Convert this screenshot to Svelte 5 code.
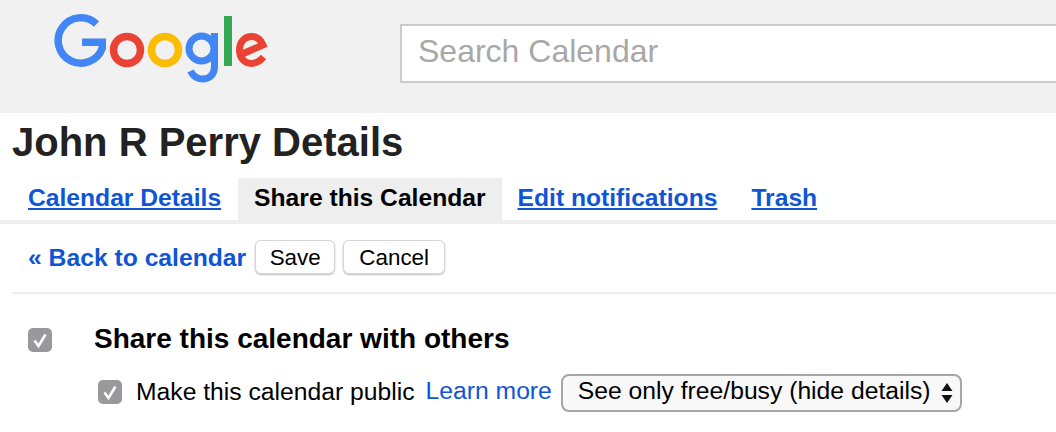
<script lang="ts">
	const tabs = [
		{ label: 'Calendar Details', active: false },
		{ label: 'Share this Calendar', active: true },
		{ label: 'Edit notifications', active: false },
		{ label: 'Trash', active: false }
	];
</script>

<div class="page">
	<header class="top">
		<svg class="logo" width="214" height="70" viewBox="54 14 214 70" aria-label="Google">
			<path d="M96.500 24 A22.700 22.700 0 1 0 102.300 48 L102.300 42.300 L82 42.300" fill="none" stroke="#4285f4" stroke-width="7.500" />
			<circle cx="127" cy="50" r="13.500" fill="none" stroke="#ea4335" stroke-width="7.500" />
			<circle cx="165" cy="50" r="13.500" fill="none" stroke="#fbbc05" stroke-width="7.500" />
			<circle cx="201.500" cy="48.500" r="12.500" fill="none" stroke="#4285f4" stroke-width="7" />
			<path d="M214.500 33 V66 C214.500 75 209.500 79 202.500 79 C197 79 193 76 190.500 71" fill="none" stroke="#4285f4" stroke-width="7" />
			<rect x="224" y="16" width="8" height="50" fill="#34a853" />
			<path d="M240 55 L263 45 C260.500 39 256 36.500 251.500 36.500 C244 36.500 239.500 42.500 239.500 50 C239.500 58 244.500 63.500 251.500 63.500 C256.500 63.500 260 61 263.500 57" fill="none" stroke="#ea4335" stroke-width="7" />
		</svg>
		<div class="search">Search Calendar</div>
	</header>

	<h1>John R Perry Details</h1>

	<nav class="tabs">
		{#each tabs as tab}
			<a class="tab" class:active={tab.active} href="#top" onclick={(e) => e.preventDefault()}>{tab.label}</a>
		{/each}
	</nav>

	<div class="actions">
		<a class="back" href="#top">« Back to calendar</a>
		<button class="save">Save</button>
		<button class="cancel">Cancel</button>
	</div>

	<section class="share">
		<div class="row main">
			<span class="check">
				<svg width="24" height="24" viewBox="0 0 24 24"><path d="M6.500 12.500 L10.500 18 L17.500 6.500" fill="none" stroke="#fff" stroke-width="2.600" /></svg>
			</span>
			<strong>Share this calendar with others</strong>
		</div>
		<div class="row sub">
			<span class="check">
				<svg width="24" height="24" viewBox="0 0 24 24"><path d="M6.500 12.500 L10.500 18 L17.500 6.500" fill="none" stroke="#fff" stroke-width="2.600" /></svg>
			</span>
			<span class="public">Make this calendar public</span>
			<a class="learn" href="#top">Learn more</a>
			<div class="select">
				<span>See only free/busy (hide details)</span>
				<svg width="12" height="24" viewBox="0 0 12 24"><path d="M6 2 L11.500 10 H0.500 Z M6 22 L0.500 14 H11.500 Z" fill="#111" /></svg>
			</div>
		</div>
	</section>
</div>

<style>
	:global(body) {
		margin: 0;
		background: #fff;
	}

	.page {
		width: 1056px;
		height: 432px;
		overflow: hidden;
		font-family: 'Liberation Sans', Arial, sans-serif;
		color: #000;
	}

	.top {
		display: flex;
		height: 113px;
		background: #f1f1f1;
		padding: 14px 0 0 54px;
		box-sizing: border-box;
	}

	.logo {
		flex: none;
		filter: blur(0.4px);
	}

	.search {
		flex: 1;
		height: 59px;
		margin: 10px 0 0 132px;
		padding-left: 16px;
		box-sizing: border-box;
		background: #fff;
		border: 2px solid #ccc;
		border-right: none;
		font-size: 32px;
		line-height: 50px;
		color: #a8a8a8;
	}

	h1 {
		margin: 0;
		padding: 8px 0 1px 12px;
		font-size: 40px;
		line-height: 42px;
		font-weight: bold;
		color: #222;
	}

	.tabs {
		display: flex;
		margin-top: 14px;
		padding-left: 12px;
		height: 42px;
		border-bottom: 4px solid #eee;
	}

	.tab {
		padding: 0 16px;
		font-size: 24.650px;
		font-weight: bold;
		line-height: 40px;
		color: #0f55d6;
	}

	.tab:first-child {
		padding-right: 17px;
	}

	.tab:nth-child(3) {
		padding-right: 18px;
	}

	.tab.active {
		background: #eee;
		color: #000;
		text-decoration: none;
	}

	.actions {
		display: flex;
		align-items: center;
		gap: 8px;
		margin: 0 0 0 12px;
		padding: 16px 0 18px 16px;
		border-bottom: 2px solid #eee;
	}

	.back {
		font-size: 24.700px;
		font-weight: bold;
		line-height: 32px;
		padding-top: 2px;
		color: #0f55d6;
		text-decoration: none;
		margin-right: 1px;
	}

	button {
		height: 34px;
		padding: 2px 0 0;
		font: 22.400px 'Liberation Sans', Arial, sans-serif;
		background: #fff;
		color: #000;
		border: 1px solid #d5d5d5;
		border-radius: 6px;
		box-shadow: 0 1px 2px rgba(0, 0, 0, 0.25);
	}

	.save {
		width: 80px;
	}

	.cancel {
		width: 102px;
	}

	.share {
		padding: 29px 0 0 28px;
	}

	.row {
		display: flex;
		align-items: center;
	}

	.check {
		flex: none;
		display: block;
		width: 24px;
		height: 24px;
		border-radius: 5px;
		background: #98989d;
	}

	.check svg {
		display: block;
	}

	.main strong {
		margin: 0 0 2px 42px;
		font-size: 28px;
		font-weight: bold;
	}

	.sub {
		margin: 15px 0 0 70px;
	}

	.public {
		margin-left: 14px;
		font-size: 24.700px;
	}

	.learn {
		margin-left: 11px;
		font-size: 24.700px;
		color: #0f55d6;
		text-decoration: none;
		padding-bottom: 2px;
	}

	.select {
		display: flex;
		align-items: center;
		justify-content: space-between;
		width: 401px;
		height: 38px;
		margin: 2px 0 0 9px;
		padding: 0 7px 5px 15px;
		box-sizing: border-box;
		font-size: 24.700px;
		background: #f8f8f8;
		border: 2px solid #a6a6a6;
		border-radius: 8px;
	}

	.select svg {
		margin-top: 5px;
	}
</style>
